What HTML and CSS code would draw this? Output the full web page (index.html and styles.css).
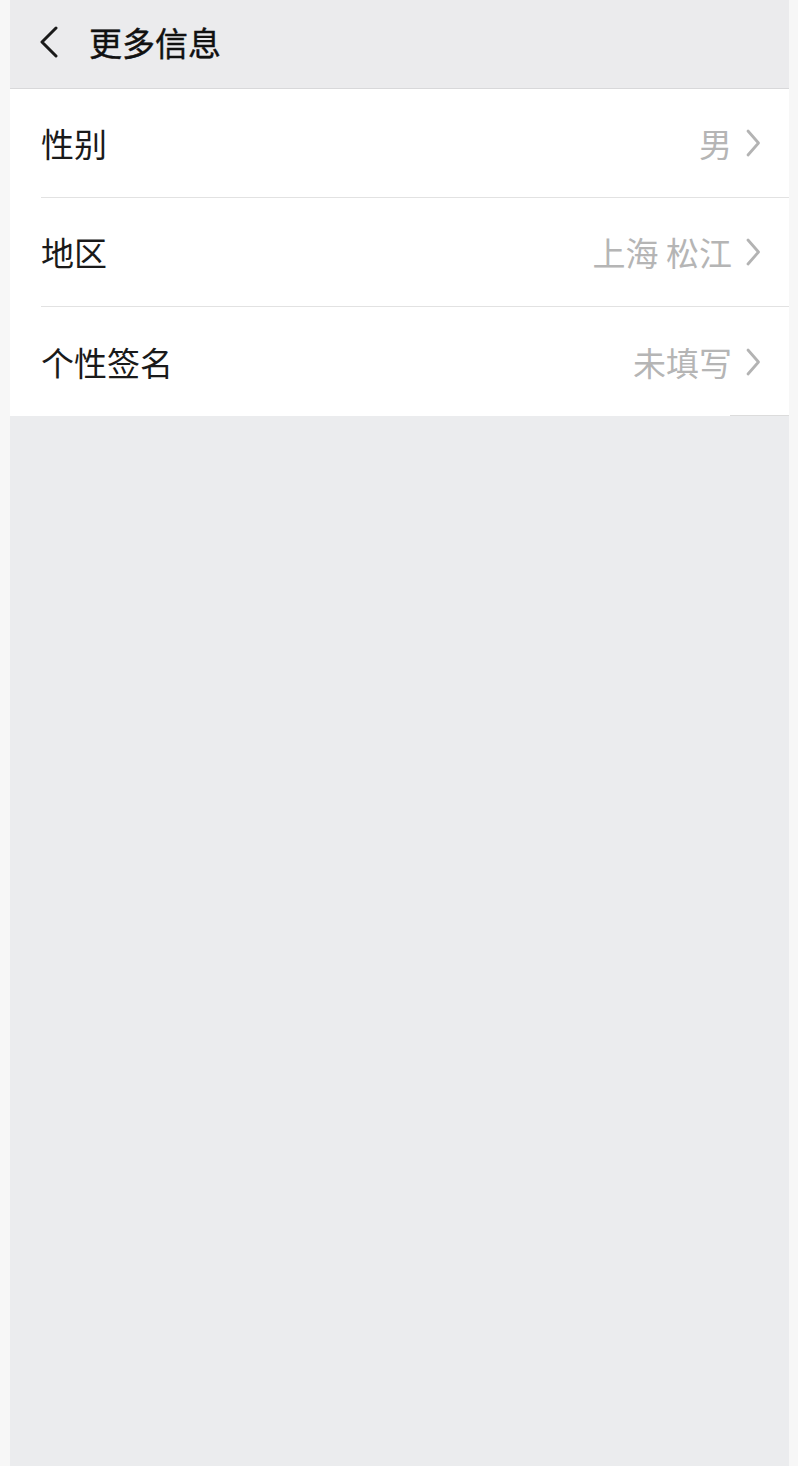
FILE: index.html
```html
<!DOCTYPE html>
<html lang="zh-CN">
<head>
<meta charset="utf-8">
<title>更多信息</title>
<link rel="stylesheet" href="styles.css">
</head>
<body>
<div class="app">
  <header class="topbar">
    <svg class="back" viewBox="0 0 20 32" width="20" height="32"><path d="M17 2 L3 16 L17 30" fill="none" stroke="#1a1a1a" stroke-width="3" stroke-linecap="round" stroke-linejoin="round"/></svg>
    <h1 class="title">更多信息</h1>
  </header>
  <ul class="list">
    <li class="row">
      <span class="label">性别</span>
      <span class="value">男</span>
      <svg class="chev" viewBox="0 0 16 28" width="16" height="28"><path d="M3 2 L13.5 14 L3 26" fill="none" stroke="#b3b3b3" stroke-width="2.8" stroke-linecap="round" stroke-linejoin="round"/></svg>
    </li>
    <li class="row">
      <span class="label">地区</span>
      <span class="value">上海 松江</span>
      <svg class="chev" viewBox="0 0 16 28" width="16" height="28"><path d="M3 2 L13.5 14 L3 26" fill="none" stroke="#b3b3b3" stroke-width="2.8" stroke-linecap="round" stroke-linejoin="round"/></svg>
    </li>
    <li class="row row-last">
      <span class="label">个性签名</span>
      <span class="value">未填写</span>
      <svg class="chev" viewBox="0 0 16 28" width="16" height="28"><path d="M3 2 L13.5 14 L3 26" fill="none" stroke="#b3b3b3" stroke-width="2.8" stroke-linecap="round" stroke-linejoin="round"/></svg>
    </li>
  </ul>
</div>
</body>
</html>
```

FILE: styles.css
```css
html, body {
  margin: 0;
  padding: 0;
}
body {
  background: #f7f7f7;
  font-family: "Noto Sans CJK SC", "Noto Sans", sans-serif;
}
.app {
  margin: 0 9px 0 10px;
  min-height: 1466px;
  background: #ebecee;
}
.topbar {
  height: 89px;
  display: flex;
  align-items: center;
  padding: 0 0 4px 29px;
  box-sizing: border-box;
  background: #ebebed;
  border-bottom: 1px solid #d8d8da;
}
.back {
  display: block;
  margin-right: 30px;
}
.title {
  margin: 0;
  font-size: 33px;
  font-weight: 400;
  color: #111;
  line-height: 1;
  -webkit-text-stroke: 0.4px #111;
}
.list {
  list-style: none;
  margin: 0;
  padding: 0 0 0 31px;
  background: #fff;
  position: relative;
}
.list::after {
  content: "";
  position: absolute;
  right: 0;
  bottom: 0;
  width: 59px;
  height: 1px;
  background: #dcdcdc;
}
.row {
  display: flex;
  align-items: center;
  height: 108px;
  border-bottom: 1px solid #e2e2e2;
  padding-right: 28px;
}
.row-last {
  border-bottom: none;
  height: 109px;
}
.label {
  flex: 1;
  font-size: 33px;
  color: #1a1a1a;
}
.value {
  font-size: 33px;
  color: #b5b5b5;
  margin-right: 13px;
}
.chev {
  display: block;
}
```
